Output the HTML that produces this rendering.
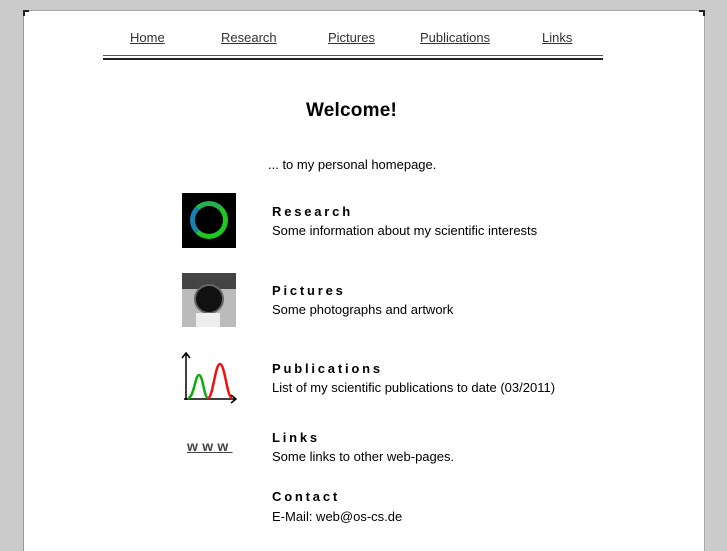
<!DOCTYPE html>
<html><head><style>
body{margin:0;width:727px;height:545px;background:#cbcbcb;font-family:"Liberation Sans",sans-serif;position:relative;overflow:hidden;color:#000}
#p{position:absolute;left:23px;top:10px;width:680px;height:540px;background:#fff;border-left:1px solid #999;border-top:1px solid #aaa;border-right:1px solid #aaa}
.c{position:absolute;width:4px;height:4px;border-left:2px solid #222;border-top:2px solid #222;}
a{color:#333;text-decoration:underline;position:absolute;font-size:13px}
.t{position:absolute;font-size:13px;white-space:nowrap}
.h{position:absolute;font-size:13px;font-weight:bold;letter-spacing:2.8px}
</style></head><body>
<div id="p"></div>
<div class="c" style="left:23px;top:10px"></div>
<div style="position:absolute;left:699px;top:10px;width:4px;height:4px;border-right:2px solid #222;border-top:2px solid #222"></div>
<a style="left:130px;top:30px">Home</a>
<a style="left:221px;top:30px">Research</a>
<a style="left:328px;top:30px">Pictures</a>
<a style="left:420px;top:30px">Publications</a>
<a style="left:542px;top:30px">Links</a>
<div style="position:absolute;left:103px;top:55px;width:500px;height:1px;background:#555"></div>
<div style="position:absolute;left:103px;top:58px;width:500px;height:2px;background:#222"></div>
<div class="t" style="left:306px;top:100px;font-size:19px;font-weight:bold;letter-spacing:0.2px">Welcome!</div>
<div class="t" style="left:268px;top:157px">... to my personal homepage.</div>
<div style="position:absolute;left:182px;top:193px;width:54px;height:55px;background:#000"><div style="position:absolute;left:8px;top:8px;width:28px;height:28px;border-radius:50%;border:5px solid #1fc81f;border-left-color:#1a80b0;border-top-color:#28b050"></div></div>
<div class="h" style="left:272px;top:204px">Research</div>
<div class="t" style="left:272px;top:223px">Some information about my scientific interests</div>
<div style="position:absolute;left:182px;top:273px;width:54px;height:54px;background:#bbb"><div style="position:absolute;left:0;top:0;width:54px;height:16px;background:#444"></div><div style="position:absolute;left:12px;top:11px;width:26px;height:26px;border-radius:50%;background:#111;border:2px solid #666"></div><div style="position:absolute;left:14px;top:40px;width:24px;height:14px;background:#eee"></div></div>
<div class="h" style="left:272px;top:283px">Pictures</div>
<div class="t" style="left:272px;top:302px">Some photographs and artwork</div>
<svg style="position:absolute;left:180px;top:350px" width="58" height="54"><path d="M6 50V4M2 8L6 3L10 8M4 49H55M51 45L56 49L51 53" stroke="#000" stroke-width="1.5" fill="none"/><path d="M8 48C14 48 15 25 19 25C23 25 24 48 28 48" stroke="#1a1" stroke-width="2.5" fill="none"/><path d="M28 48C33 48 35 14 40 14C45 14 47 48 52 48" stroke="#e11" stroke-width="2.5" fill="none"/></svg>
<div class="h" style="left:272px;top:361px">Publications</div>
<div class="t" style="left:272px;top:380px">List of my scientific publications to date (03/2011)</div>
<a style="left:187px;top:438px;font-weight:bold;letter-spacing:4.3px;font-size:14px;color:#444">www</a>
<div class="h" style="left:272px;top:430px">Links</div>
<div class="t" style="left:272px;top:449px">Some links to other web-pages.</div>
<div class="h" style="left:272px;top:489px">Contact</div>
<div class="t" style="left:272px;top:509px">E-Mail: web@os-cs.de</div>
</body></html>
